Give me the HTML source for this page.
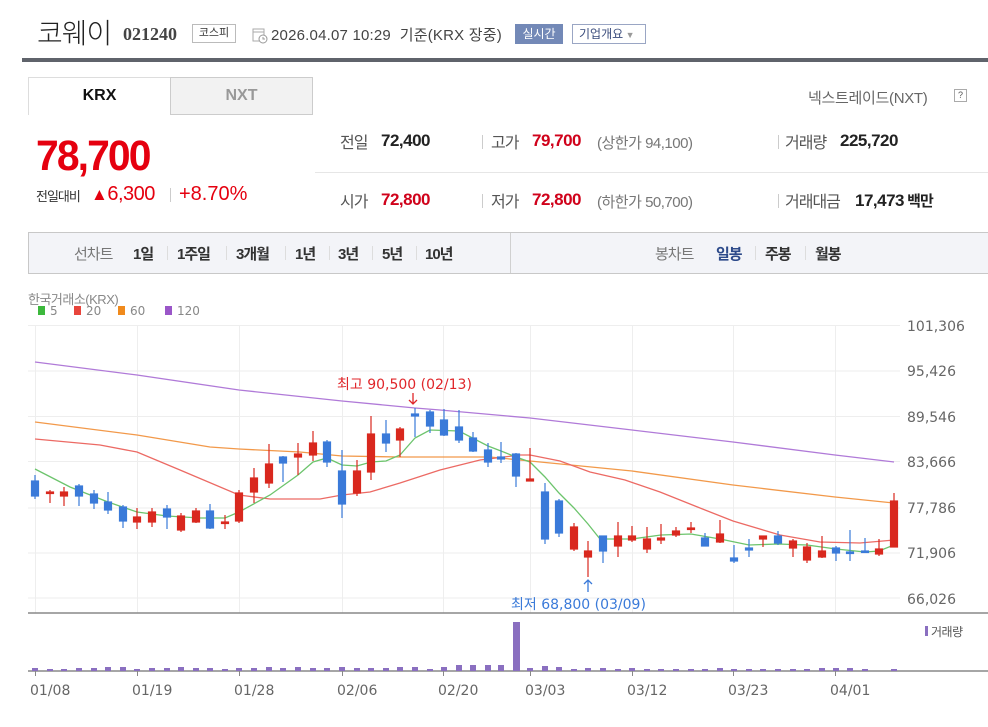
<!DOCTYPE html>
<html><head><meta charset="utf-8"><style>
*{margin:0;padding:0;box-sizing:border-box}
body{width:988px;height:727px;background:#fff;position:relative;overflow:hidden;font-family:"Liberation Sans","Noto Sans CJK KR",sans-serif;color:#333}
.a{position:absolute;white-space:nowrap}
.lab{color:#555;font-size:16px;letter-spacing:-1px;margin-top:-3px}
.val{font-weight:bold;font-size:17px;letter-spacing:-0.5px;color:#222}
.red{color:#d0021b}
.sub{color:#777;font-size:15px;letter-spacing:-0.5px;margin-top:-1px}
.bar{width:1px;height:14px;background:#ccc}
.pb{font-size:15px;font-weight:bold;color:#333;letter-spacing:-1px}
</style></head><body>
<!-- header -->
<div class="a" style="left:37px;top:12px;font-size:28px;color:#222;font-family:'Noto Sans CJK KR',sans-serif;font-weight:300;letter-spacing:-1px">코웨이</div>
<div class="a" style="left:123px;top:24px;font-size:18px;font-weight:bold;color:#444;font-family:'Liberation Serif',serif">021240</div>
<div class="a" style="left:192px;top:24px;width:44px;height:19px;border:1px solid #bbb;font-size:11px;text-align:center;line-height:17px;color:#333">코스피</div>
<svg class="a" style="left:252px;top:26px" width="16" height="18"><rect x="1" y="3" width="11" height="12" fill="none" stroke="#aaa"/><line x1="1" y1="6" x2="12" y2="6" stroke="#aaa"/><circle cx="11" cy="13" r="4" fill="#fff" stroke="#999"/><path d="M11 11v2h2" stroke="#999" fill="none"/></svg>
<div class="a" style="left:271px;top:24px;font-size:15px;color:#444;letter-spacing:0.2px">2026.04.07 10:29 &nbsp;기준(KRX 장중)</div>
<div class="a" style="left:515px;top:24px;width:48px;height:20px;background:#7389b7;color:#fff;font-size:12px;text-align:center;line-height:20px">실시간</div>
<div class="a" style="left:572px;top:24px;width:74px;height:20px;border:1px solid #9aa6c4;color:#3a4c7c;font-size:12px;line-height:18px;padding-left:6px">기업개요<span style="color:#999;font-size:9px"> ▼</span></div>
<div class="a" style="left:22px;top:58px;width:966px;height:4px;background:#5f636b"></div>
<!-- tabs -->
<div class="a" style="left:28px;top:77px;width:143px;height:38px;border:1px solid #ddd;border-bottom:none;background:#fff;text-align:center;line-height:36px;font-weight:bold;font-size:16px;color:#111">KRX</div>
<div class="a" style="left:170px;top:77px;width:143px;height:38px;border:1px solid #ccc;background:#f2f2f2;text-align:center;line-height:36px;font-weight:bold;font-size:16px;color:#999">NXT</div>
<div class="a" style="left:808px;top:87px;font-size:15px;color:#666;letter-spacing:-0.3px">넥스트레이드(NXT)</div>
<div class="a" style="left:954px;top:89px;width:13px;height:13px;border:1px solid #aaa;font-size:9px;line-height:11px;text-align:center;color:#555">?</div>
<!-- price -->
<div class="a" style="left:36px;top:132px;font-size:43px;font-weight:bold;color:#e5000f;letter-spacing:-2px;transform:scaleX(.95);transform-origin:left">78,700</div>
<div class="a" style="left:36px;top:186px;font-size:13px;color:#333;letter-spacing:-1px">전일대비</div>
<div class="a" style="left:91px;top:183px;font-size:20px;color:#e5000f;letter-spacing:-0.5px"><span style="font-size:17px">▲</span>6,300</div>
<div class="a bar" style="left:170px;top:188px"></div>
<div class="a" style="left:179px;top:183px;font-size:20px;color:#e5000f">+8.70%</div>
<!-- info -->
<div class="a lab" style="left:340px;top:132px">전일</div><div class="a val" style="left:381px;top:131px">72,400</div>
<div class="a bar" style="left:482px;top:135px"></div>
<div class="a lab" style="left:491px;top:132px">고가</div><div class="a val red" style="left:532px;top:131px">79,700</div><div class="a sub" style="left:597px;top:133px">(상한가 94,100)</div>
<div class="a bar" style="left:778px;top:135px"></div>
<div class="a lab" style="left:785px;top:132px">거래량</div><div class="a val" style="left:840px;top:131px">225,720</div>
<div class="a" style="left:315px;top:172px;width:673px;height:1px;background:#e6e6e6"></div>
<div class="a lab" style="left:340px;top:191px">시가</div><div class="a val red" style="left:381px;top:190px">72,800</div>
<div class="a bar" style="left:482px;top:194px"></div>
<div class="a lab" style="left:491px;top:191px">저가</div><div class="a val red" style="left:532px;top:190px">72,800</div><div class="a sub" style="left:597px;top:192px">(하한가 50,700)</div>
<div class="a bar" style="left:778px;top:194px"></div>
<div class="a lab" style="left:785px;top:191px">거래대금</div><div class="a val" style="left:855px;top:190px">17,473<span style="font-size:15px;letter-spacing:-1px"> 백만</span></div>
<!-- period bar -->
<div class="a" style="left:28px;top:232px;width:960px;height:42px;background:#f3f4f8;border:1px solid #c8c8c8;border-right:none"></div>
<div class="a" style="left:510px;top:233px;width:1px;height:40px;background:#d0d0d0"></div>
<div class="a" style="left:74px;top:243px;font-size:15px;color:#777;letter-spacing:-1px">선차트</div>
<div class="a pb" style="left:133px;top:243px">1일</div><div class="a bar" style="left:167px;top:246px;background:#ddd"></div>
<div class="a pb" style="left:177px;top:243px">1주일</div><div class="a bar" style="left:226px;top:246px;background:#ddd"></div>
<div class="a pb" style="left:236px;top:243px">3개월</div><div class="a bar" style="left:285px;top:246px;background:#ddd"></div>
<div class="a pb" style="left:295px;top:243px">1년</div><div class="a bar" style="left:329px;top:246px;background:#ddd"></div>
<div class="a pb" style="left:338px;top:243px">3년</div><div class="a bar" style="left:372px;top:246px;background:#ddd"></div>
<div class="a pb" style="left:382px;top:243px">5년</div><div class="a bar" style="left:416px;top:246px;background:#ddd"></div>
<div class="a pb" style="left:425px;top:243px">10년</div>
<div class="a" style="left:655px;top:243px;font-size:15px;color:#777;letter-spacing:-1px">봉차트</div>
<div class="a pb" style="left:716px;top:243px;color:#2d4a8a">일봉</div><div class="a bar" style="left:755px;top:246px;background:#ddd"></div>
<div class="a pb" style="left:765px;top:243px">주봉</div><div class="a bar" style="left:805px;top:246px;background:#ddd"></div>
<div class="a pb" style="left:815px;top:243px">월봉</div>
<!-- chart legend -->
<div class="a" style="left:28px;top:289px;font-size:13px;color:#888;letter-spacing:-0.5px">한국거래소(KRX)</div>
<svg class="a" style="left:0;top:0" width="988" height="727">
<g font-family="DejaVu Sans,sans-serif" font-size="12" fill="#888">
<rect x="38" y="306" width="7" height="9" fill="#3cb83c"/><text x="50" y="315">5</text>
<rect x="74" y="306" width="7" height="9" fill="#e8453c"/><text x="86" y="315">20</text>
<rect x="118" y="306" width="7" height="9" fill="#f08a1c"/><text x="130" y="315">60</text>
<rect x="165" y="306" width="7" height="9" fill="#9a56c8"/><text x="177" y="315">120</text>
</g>
<g stroke="#eeeeee" stroke-width="1">
<line x1="28" y1="325.5" x2="900" y2="325.5"/><line x1="28" y1="371" x2="900" y2="371"/><line x1="28" y1="416.5" x2="900" y2="416.5"/><line x1="28" y1="461.5" x2="900" y2="461.5"/><line x1="28" y1="508" x2="900" y2="508"/><line x1="28" y1="553" x2="900" y2="553"/><line x1="28" y1="598" x2="900" y2="598"/>
<line x1="35.5" y1="325" x2="35.5" y2="613"/><line x1="137.5" y1="325" x2="137.5" y2="613"/><line x1="239.5" y1="325" x2="239.5" y2="613"/><line x1="342.5" y1="325" x2="342.5" y2="613"/><line x1="443.5" y1="325" x2="443.5" y2="613"/><line x1="530.5" y1="325" x2="530.5" y2="613"/><line x1="632.5" y1="325" x2="632.5" y2="613"/><line x1="733.5" y1="325" x2="733.5" y2="613"/><line x1="835.5" y1="325" x2="835.5" y2="613"/>
</g>
<line x1="28" y1="613" x2="988" y2="613" stroke="#888" stroke-width="1.5"/>
<line x1="28" y1="671" x2="988" y2="671" stroke="#888" stroke-width="1.5"/>
<g font-family="DejaVu Sans,sans-serif" font-size="14" fill="#666">
<text x="907" y="331">101,306</text><text x="907" y="376">95,426</text><text x="907" y="422">89,546</text><text x="907" y="467">83,666</text><text x="907" y="513">77,786</text><text x="907" y="558">71,906</text><text x="907" y="604">66,026</text>
<text x="30" y="695">01/08</text><text x="132" y="695">01/19</text><text x="234" y="695">01/28</text><text x="337" y="695">02/06</text><text x="438" y="695">02/20</text><text x="525" y="695">03/03</text><text x="627" y="695">03/12</text><text x="728" y="695">03/23</text><text x="830" y="695">04/01</text>
</g>
<g stroke="#888" stroke-width="1"><line x1="35.5" y1="671" x2="35.5" y2="676"/><line x1="137.5" y1="671" x2="137.5" y2="676"/><line x1="239.5" y1="671" x2="239.5" y2="676"/><line x1="342.5" y1="671" x2="342.5" y2="676"/><line x1="443.5" y1="671" x2="443.5" y2="676"/><line x1="530.5" y1="671" x2="530.5" y2="676"/><line x1="632.5" y1="671" x2="632.5" y2="676"/><line x1="733.5" y1="671" x2="733.5" y2="676"/><line x1="835.5" y1="671" x2="835.5" y2="676"/></g>
<!-- MAs -->
<g fill="none" stroke-width="1.3">
<polyline stroke="#b07ad8" points="35,362 137,375 239,390 342,401 415,408 440,410 530,418 632,430 733,442 835,455 894,462"/>
<polyline stroke="#f2994a" points="35,422 137,435 210,447 239,449 300,452 342,456 400,457 490,457 530,461 632,471 733,485 835,497 894,503"/>
<polyline stroke="#ec6a64" points="35,439 100,445 137,452 180,470 239,495 270,499 320,499 342,495 370,492 400,483 440,470 480,460 520,455 530,455 560,461 590,472 625,480 660,492 700,508 733,521 780,535 820,542 860,543 894,540"/>
<polyline stroke="#6cc46c" points="35,469 70,487 108,502 137,512 167,516 200,518 225,518 239,512 270,495 298,475 313,462 327,458 342,465 357,466 371,462 386,461 400,455 415,438 430,430 459,431 488,446 501,451 516,457 530,462 545,477 559,493 574,508 588,524 600,539 632,539 661,535 691,534 720,539 749,545 778,544 807,545 836,549 865,552 879,551 894,545"/>
</g>
<!-- candles -->
<g stroke-width="1.2">
<g stroke="#3a7ad9" fill="#3a7ad9">
<line x1="35" y1="475" x2="35" y2="499"/><rect x="31.5" y="481" width="7" height="15"/>
<line x1="79" y1="484" x2="79" y2="506"/><rect x="75.5" y="486" width="7" height="10"/>
<line x1="94" y1="490" x2="94" y2="509"/><rect x="90.5" y="494" width="7" height="9"/>
<line x1="108" y1="492" x2="108" y2="514"/><rect x="104.5" y="502" width="7" height="8"/>
<line x1="123" y1="505" x2="123" y2="528"/><rect x="119.5" y="507" width="7" height="14"/>
<line x1="167" y1="505" x2="167" y2="529"/><rect x="163.5" y="509" width="7" height="8"/>
<line x1="210" y1="504" x2="210" y2="529"/><rect x="206.5" y="511" width="7" height="17"/>
<line x1="283" y1="456" x2="283" y2="482"/><rect x="279.5" y="457" width="7" height="6"/>
<line x1="327" y1="440" x2="327" y2="467"/><rect x="323.5" y="442" width="7" height="20"/>
<line x1="342" y1="450" x2="342" y2="518"/><rect x="338.5" y="471" width="7" height="33"/>
<line x1="386" y1="420" x2="386" y2="452"/><rect x="382.5" y="434" width="7" height="9"/>
<line x1="415" y1="408" x2="415" y2="437"/><rect x="411.5" y="414" width="7" height="2"/>
<line x1="430" y1="410" x2="430" y2="433"/><rect x="426.5" y="412" width="7" height="14"/>
<line x1="444" y1="409" x2="444" y2="436"/><rect x="440.5" y="420" width="7" height="15"/>
<line x1="459" y1="410" x2="459" y2="443"/><rect x="455.5" y="427" width="7" height="13"/>
<line x1="473" y1="432" x2="473" y2="452"/><rect x="469.5" y="438" width="7" height="13"/>
<line x1="488" y1="443" x2="488" y2="467"/><rect x="484.5" y="450" width="7" height="12"/>
<line x1="501" y1="442" x2="501" y2="463"/><rect x="497.5" y="457" width="7" height="2"/>
<line x1="516" y1="453" x2="516" y2="487"/><rect x="512.5" y="454" width="7" height="22"/>
<line x1="545" y1="483" x2="545" y2="544"/><rect x="541.5" y="492" width="7" height="47"/>
<line x1="559" y1="499" x2="559" y2="537"/><rect x="555.5" y="501" width="7" height="32"/>
<line x1="603" y1="536" x2="603" y2="563"/><rect x="599.5" y="536" width="7" height="15"/>
<line x1="705" y1="533" x2="705" y2="546"/><rect x="701.5" y="538" width="7" height="8"/>
<line x1="734" y1="545" x2="734" y2="563"/><rect x="730.5" y="558" width="7" height="3"/>
<line x1="749" y1="539" x2="749" y2="557"/><rect x="745.5" y="548" width="7" height="2"/>
<line x1="778" y1="531" x2="778" y2="545"/><rect x="774.5" y="536" width="7" height="7"/>
<line x1="836" y1="546" x2="836" y2="561"/><rect x="832.5" y="548" width="7" height="5"/>
<line x1="850" y1="530" x2="850" y2="561"/><rect x="846.5" y="552" width="7" height="1.5"/>
<line x1="865" y1="538" x2="865" y2="553"/><rect x="861.5" y="551" width="7" height="1.5"/>
</g>
<g stroke="#d9281e" fill="#d9281e">
<line x1="50" y1="490" x2="50" y2="503"/><rect x="46.5" y="492" width="7" height="1.5"/>
<line x1="64" y1="487" x2="64" y2="506"/><rect x="60.5" y="492" width="7" height="4"/>
<line x1="137" y1="508" x2="137" y2="529"/><rect x="133.5" y="517" width="7" height="5"/>
<line x1="152" y1="508" x2="152" y2="527"/><rect x="148.5" y="512" width="7" height="10"/>
<line x1="181" y1="513" x2="181" y2="532"/><rect x="177.5" y="516" width="7" height="14"/>
<line x1="196" y1="508" x2="196" y2="523"/><rect x="192.5" y="511" width="7" height="11"/>
<line x1="225" y1="515" x2="225" y2="529"/><rect x="221.5" y="522" width="7" height="1.5"/>
<line x1="239" y1="490" x2="239" y2="523"/><rect x="235.5" y="493" width="7" height="28"/>
<line x1="254" y1="468" x2="254" y2="503"/><rect x="250.5" y="478" width="7" height="14"/>
<line x1="269" y1="444" x2="269" y2="488"/><rect x="265.5" y="464" width="7" height="19"/>
<line x1="298" y1="443" x2="298" y2="475"/><rect x="294.5" y="454" width="7" height="3"/>
<line x1="313" y1="431" x2="313" y2="461"/><rect x="309.5" y="443" width="7" height="12"/>
<line x1="357" y1="460" x2="357" y2="496"/><rect x="353.5" y="471" width="7" height="22"/>
<line x1="371" y1="416" x2="371" y2="480"/><rect x="367.5" y="434" width="7" height="38"/>
<line x1="400" y1="427" x2="400" y2="457"/><rect x="396.5" y="429" width="7" height="11"/>
<line x1="530" y1="448" x2="530" y2="481"/><rect x="526.5" y="479" width="7" height="2"/>
<line x1="574" y1="523" x2="574" y2="551"/><rect x="570.5" y="527" width="7" height="22"/>
<line x1="588" y1="541" x2="588" y2="577"/><rect x="584.5" y="551" width="7" height="6"/>
<line x1="618" y1="522" x2="618" y2="557"/><rect x="614.5" y="536" width="7" height="10"/>
<line x1="632" y1="526" x2="632" y2="542"/><rect x="628.5" y="536" width="7" height="4"/>
<line x1="647" y1="527" x2="647" y2="553"/><rect x="643.5" y="539" width="7" height="10"/>
<line x1="661" y1="524" x2="661" y2="544"/><rect x="657.5" y="538" width="7" height="2"/>
<line x1="676" y1="527" x2="676" y2="537"/><rect x="672.5" y="531" width="7" height="4"/>
<line x1="691" y1="522" x2="691" y2="533"/><rect x="687.5" y="528" width="7" height="1.5"/>
<line x1="720" y1="520" x2="720" y2="543"/><rect x="716.5" y="534" width="7" height="8"/>
<line x1="763" y1="536" x2="763" y2="547"/><rect x="759.5" y="536" width="7" height="3"/>
<line x1="793" y1="539" x2="793" y2="557"/><rect x="789.5" y="541" width="7" height="7"/>
<line x1="807" y1="543" x2="807" y2="563"/><rect x="803.5" y="547" width="7" height="13"/>
<line x1="822" y1="536" x2="822" y2="558"/><rect x="818.5" y="551" width="7" height="6"/>
<line x1="879" y1="539" x2="879" y2="556"/><rect x="875.5" y="549" width="7" height="5"/>
<line x1="894" y1="493" x2="894" y2="547"/><rect x="890.5" y="501" width="7" height="46"/>
</g>
</g>
<!-- annotations -->
<text x="337" y="389" font-family="DejaVu Sans,Noto Sans CJK KR,sans-serif" font-size="14" fill="#e0262a">최고 90,500 (02/13)</text>
<path d="M413 393v11M409 400l4 4 4-4" stroke="#e0262a" fill="none" stroke-width="1.3"/>
<text x="511" y="609" font-family="DejaVu Sans,Noto Sans CJK KR,sans-serif" font-size="14" fill="#3a7ad9">최저 68,800 (03/09)</text>
<path d="M588 592v-12M584 584l4-4 4 4" stroke="#3a7ad9" fill="none" stroke-width="1.3"/>
<!-- volume -->
<g fill="#8a6fc0">
<rect x="32" y="668" width="6" height="3"/><rect x="47" y="669" width="6" height="2"/><rect x="61" y="669" width="6" height="2"/><rect x="76" y="668" width="6" height="3"/><rect x="91" y="668" width="6" height="3"/><rect x="105" y="667" width="6" height="4"/><rect x="120" y="667" width="6" height="4"/><rect x="134" y="669" width="6" height="2"/><rect x="149" y="668" width="6" height="3"/><rect x="164" y="668" width="6" height="3"/><rect x="178" y="667" width="6" height="4"/><rect x="193" y="668" width="6" height="3"/><rect x="207" y="668" width="6" height="3"/><rect x="222" y="669" width="6" height="2"/><rect x="236" y="668" width="6" height="3"/><rect x="251" y="668" width="6" height="3"/><rect x="266" y="667" width="6" height="4"/><rect x="280" y="668" width="6" height="3"/><rect x="295" y="667" width="6" height="4"/><rect x="310" y="668" width="6" height="3"/><rect x="324" y="668" width="6" height="3"/><rect x="339" y="667" width="6" height="4"/><rect x="354" y="668" width="6" height="3"/><rect x="368" y="668" width="6" height="3"/><rect x="383" y="668" width="6" height="3"/><rect x="397" y="667" width="6" height="4"/><rect x="412" y="667" width="6" height="4"/><rect x="427" y="669" width="6" height="2"/><rect x="441" y="667" width="6" height="4"/><rect x="456" y="665" width="6" height="6"/><rect x="470" y="665" width="6" height="6"/><rect x="485" y="665" width="6" height="6"/><rect x="498" y="665" width="6" height="6"/><rect x="513" y="622" width="7" height="49"/><rect x="527" y="668" width="6" height="3"/><rect x="542" y="666" width="6" height="5"/><rect x="556" y="667" width="6" height="4"/><rect x="571" y="669" width="6" height="2"/><rect x="585" y="668" width="6" height="3"/><rect x="600" y="668" width="6" height="3"/><rect x="615" y="669" width="6" height="2"/><rect x="629" y="668" width="6" height="3"/><rect x="644" y="669" width="6" height="2"/><rect x="658" y="669" width="6" height="2"/><rect x="673" y="669" width="6" height="2"/><rect x="688" y="669" width="6" height="2"/><rect x="702" y="669" width="6" height="2"/><rect x="717" y="668" width="6" height="3"/><rect x="731" y="669" width="6" height="2"/><rect x="746" y="669" width="6" height="2"/><rect x="760" y="669" width="6" height="2"/><rect x="775" y="669" width="6" height="2"/><rect x="790" y="669" width="6" height="2"/><rect x="804" y="669" width="6" height="2"/><rect x="819" y="668" width="6" height="3"/><rect x="833" y="668" width="6" height="3"/><rect x="847" y="668" width="6" height="3"/><rect x="862" y="669" width="6" height="2"/><rect x="891" y="669" width="6" height="2"/>
<rect x="925" y="626" width="3" height="10"/>
</g>
<text x="931" y="636" font-family="Liberation Sans,Noto Sans CJK KR,sans-serif" font-size="12" fill="#555" letter-spacing="-0.5">거래량</text>
</svg>
</body></html>
